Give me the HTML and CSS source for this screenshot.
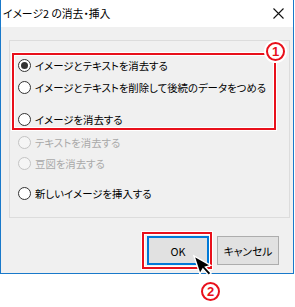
FILE: index.html
```html
<!DOCTYPE html>
<html lang="ja">
<head>
<meta charset="utf-8">
<link rel="stylesheet" href="styles.css">
</head>
<body>
<div class="page">
  <div class="window">
    <div class="titlebar">
      <span class="title">イメージ2 の消去・挿入</span>
      <svg class="close" width="11" height="11" viewBox="0 0 11 11"><path d="M0.5 0.5L10.5 10.5M10.5 0.5L0.5 10.5" stroke="#111" stroke-width="1.1" fill="none"/></svg>
    </div>
    <div class="client">
      <div class="group">
        <div class="opt r1"><span class="radio checked"></span><span>イメージとテキストを消去する</span></div>
        <div class="opt r2"><span class="radio"></span><span>イメージとテキストを削除して後続のデータをつめる</span></div>
        <div class="opt r3"><span class="radio"></span><span>イメージを消去する</span></div>
        <div class="opt r4 disabled"><span class="radio"></span><span>テキストを消去する</span></div>
        <div class="opt r5 disabled"><span class="radio"></span><span>豆図を消去する</span></div>
        <div class="opt r6"><span class="radio"></span><span>新しいイメージを挿入する</span></div>
      </div>
      <div class="buttons">
        <div class="btn ok">OK</div>
        <div class="btn">キャンセル</div>
      </div>
    </div>
  </div>
  <div class="mark box1"></div>
  <div class="badge b1">1</div>
  <div class="mark box2"></div>
  <svg class="pointer" width="22" height="30" viewBox="0 0 22 30"><path d="M2 2 L2 21 L6.5 17 L10 25 L13 23.5 L9.5 16 L15 16 Z" fill="#000" stroke="#fff" stroke-width="1.4" stroke-linejoin="miter"/></svg>
  <div class="badge b2">2</div>
</div>
</body>
</html>
```

FILE: styles.css
```css
html, body {
  margin: 0;
  padding: 0;
  background: #ffffff;
}

.page {
  position: relative;
  width: 295px;
  height: 307px;
  font-family: "Noto Sans CJK JP", "Liberation Sans", sans-serif;
  font-feature-settings: "palt";
  color: #000;
}

.window {
  width: 294px;
  box-sizing: border-box;
  border-left: 1px solid #1979ca;
  border-right: 1px solid #1979ca;
  border-bottom: 1px solid #1979ca;
  background: #fff;
}

.titlebar {
  height: 27px;
  display: flex;
  align-items: center;
  justify-content: space-between;
  padding: 0 9px 0 2px;
  background: #fff;
}

.title {
  font-size: 10.8px;
  line-height: 27px;
}

.close {
  display: block;
  margin-top: -1px;
}

.client {
  background: #f0f0f0;
  padding: 13px 3px 8px 8px;
}

.group {
  height: 178px;
  box-sizing: border-box;
  border: 1px solid #dcdcdc;
  padding: 14px 0 0 8px;
}

.opt {
  height: 20px;
  display: flex;
  align-items: center;
  gap: 4px;
  font-size: 10.4px;
  white-space: nowrap;
}

.r2 { margin-top: 2px; }
.r3 { margin-top: 12px; }
.r4 { margin-top: 3px; }
.r5 { margin-top: 1px; }
.r6 { margin-top: 10px; }

.radio {
  width: 13px;
  height: 13px;
  box-sizing: border-box;
  border: 1px solid #333;
  border-radius: 50%;
  background: #fff;
  display: flex;
  align-items: center;
  justify-content: center;
  flex: none;
}

.radio.checked::after {
  content: "";
  width: 7px;
  height: 7px;
  border-radius: 50%;
  background: #333;
}

.disabled {
  color: #a9a9a9;
}

.disabled .radio {
  border-color: #c4c4c4;
  background: #f5f5f5;
}

.buttons {
  display: flex;
  justify-content: flex-end;
  gap: 8px;
  margin-top: 18px;
  padding-right: 11px;
}

.btn {
  width: 62px;
  height: 29px;
  box-sizing: border-box;
  border: 1px solid #adadad;
  background: #e1e1e1;
  display: flex;
  align-items: center;
  justify-content: center;
  font-size: 10.8px;
}

.btn.ok {
  border: 2px solid #0078d7;
}

.mark {
  position: absolute;
  box-sizing: border-box;
  border: 2px solid #e8101b;
  box-shadow: 0 0 0 1px #fff, inset 0 0 0 1px #fff;
}

.box1 {
  left: 12px;
  top: 53px;
  width: 264px;
  height: 77px;
}

.box2 {
  left: 142px;
  top: 232px;
  width: 70px;
  height: 37px;
}

.badge {
  position: absolute;
  width: 19px;
  height: 19px;
  box-sizing: border-box;
  border: 2px solid #e8101b;
  border-radius: 50%;
  background: #fff;
  box-shadow: 0 0 0 2px #fff;
  color: #e8101b;
  font-family: "Liberation Sans", sans-serif;
  font-weight: bold;
  font-size: 13px;
  line-height: 15px;
  text-align: center;
}

.b1 {
  left: 266px;
  top: 42px;
}

.b2 {
  left: 201px;
  top: 282px;
}

.pointer {
  position: absolute;
  left: 192px;
  top: 254px;
  transform: rotate(-18deg);
  transform-origin: 2px 2px;
}
```
